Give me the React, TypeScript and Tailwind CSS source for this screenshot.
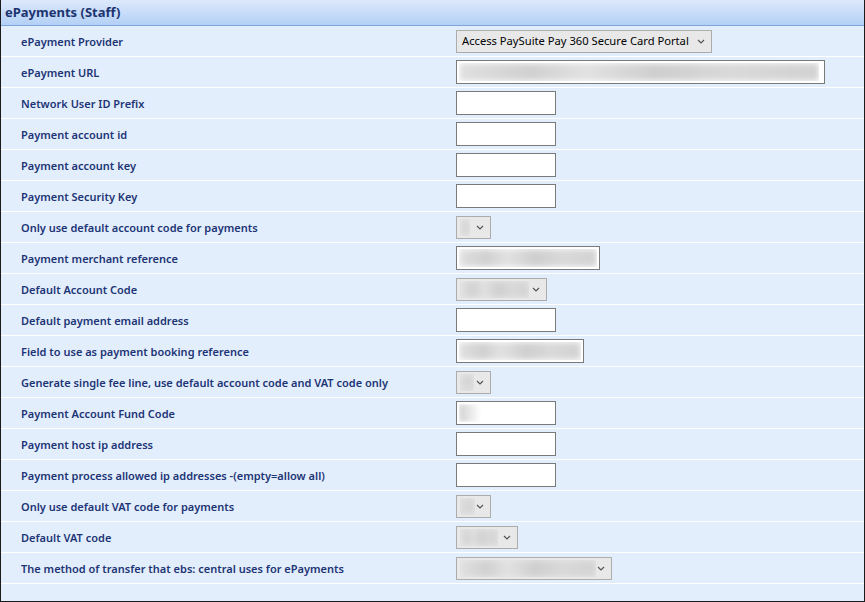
import { ReactNode } from "react";

type Control =
  | { kind: "select"; w: number; text?: string; blur?: number }
  | { kind: "input"; w: number; blur?: number };

type Row = { label: string; control: Control };

const rows: Row[] = [
  {
    label: "ePayment Provider",
    control: { kind: "select", w: 256, text: "Access PaySuite Pay 360 Secure Card Portal" },
  },
  { label: "ePayment URL", control: { kind: "input", w: 369, blur: 360 } },
  { label: "Network User ID Prefix", control: { kind: "input", w: 100 } },
  { label: "Payment account id", control: { kind: "input", w: 100 } },
  { label: "Payment account key", control: { kind: "input", w: 100 } },
  { label: "Payment Security Key", control: { kind: "input", w: 100 } },
  { label: "Only use default account code for payments", control: { kind: "select", w: 35, blur: 10 } },
  { label: "Payment merchant reference", control: { kind: "input", w: 144, blur: 138 } },
  { label: "Default Account Code", control: { kind: "select", w: 91, blur: 69 } },
  { label: "Default payment email address", control: { kind: "input", w: 100 } },
  { label: "Field to use as payment booking reference", control: { kind: "input", w: 128, blur: 122 } },
  {
    label: "Generate single fee line, use default account code and VAT code only",
    control: { kind: "select", w: 35, blur: 14 },
  },
  { label: "Payment Account Fund Code", control: { kind: "input", w: 100, blur: 22 } },
  { label: "Payment host ip address", control: { kind: "input", w: 100 } },
  { label: "Payment process allowed ip addresses -(empty=allow all)", control: { kind: "input", w: 100 } },
  { label: "Only use default VAT code for payments", control: { kind: "select", w: 35, blur: 15 } },
  { label: "Default VAT code", control: { kind: "select", w: 62, blur: 38 } },
  { label: "The method of transfer that ebs: central uses for ePayments", control: { kind: "select", w: 156, blur: 136 } },
];

const Chevron = () => (
  <svg width="8" height="5" viewBox="0 0 8 5" className="shrink-0">
    <polyline points="1,1 4,4 7,1" fill="none" stroke="#555" strokeWidth="1.2" />
  </svg>
);

const Blurred = ({ w, fade }: { w: number; fade?: boolean }) => (
  <div className="h-full overflow-hidden" style={{ width: w }}>
    <div
      className={
        fade
          ? "h-full blur-[2px] bg-gradient-to-r from-[#d2d2d2] to-white"
          : "h-full blur-[3px] bg-[linear-gradient(90deg,#e0e0e0,#d0d0d0_20%,#e2e2e2_35%,#cecece_55%,#d9d9d9_75%,#d2d2d2)]"
      }
    />
  </div>
);

const Field = ({ c }: { c: Control }): ReactNode => {
  if (c.kind === "select") {
    return (
      <div
        className="h-[23px] flex items-center justify-between border border-[#acacac] bg-[#e8e8e8] pl-[3px] pr-[6px]"
        style={{ width: c.w }}
      >
        {c.text ? (
          <span className="text-[11.2px] text-black pl-[2px] whitespace-nowrap">{c.text}</span>
        ) : (
          <div className="h-[17px]">
            <Blurred w={c.blur ?? 10} />
          </div>
        )}
        <Chevron />
      </div>
    );
  }
  return (
    <div
      className="h-[24px] border border-[#7a7a7a] bg-white p-[2px]"
      style={{ width: c.w }}
    >
      {c.blur ? <Blurred w={c.blur} fade={c.blur < 40} /> : null}
    </div>
  );
};

export default function App() {
  return (
    <div
      className="w-[865px] h-[602px] bg-[#e3eefd] border-x border-b border-[#1b1b1b] flex flex-col"
      style={{ fontFamily: '"Noto Sans", "Open Sans", sans-serif' }}
    >
      <div className="h-[26px] shrink-0 flex items-center pl-[4px] pt-[1px] bg-gradient-to-b from-[#dde9fb] to-[#b3d0f6] border-b border-[#7ea4d9]">
        <span className="text-[13px] font-bold text-[#1c3470]">ePayments (Staff)</span>
      </div>
      {rows.map((r) => (
        <div
          key={r.label}
          className="h-[31px] shrink-0 flex items-center border-b border-white"
        >
          <div className="w-[455px] pl-[20px] pt-[2px] text-[11px] font-semibold text-[#1d3575] whitespace-nowrap">
            {r.label}
          </div>
          <Field c={r.control} />
        </div>
      ))}
    </div>
  );
}
